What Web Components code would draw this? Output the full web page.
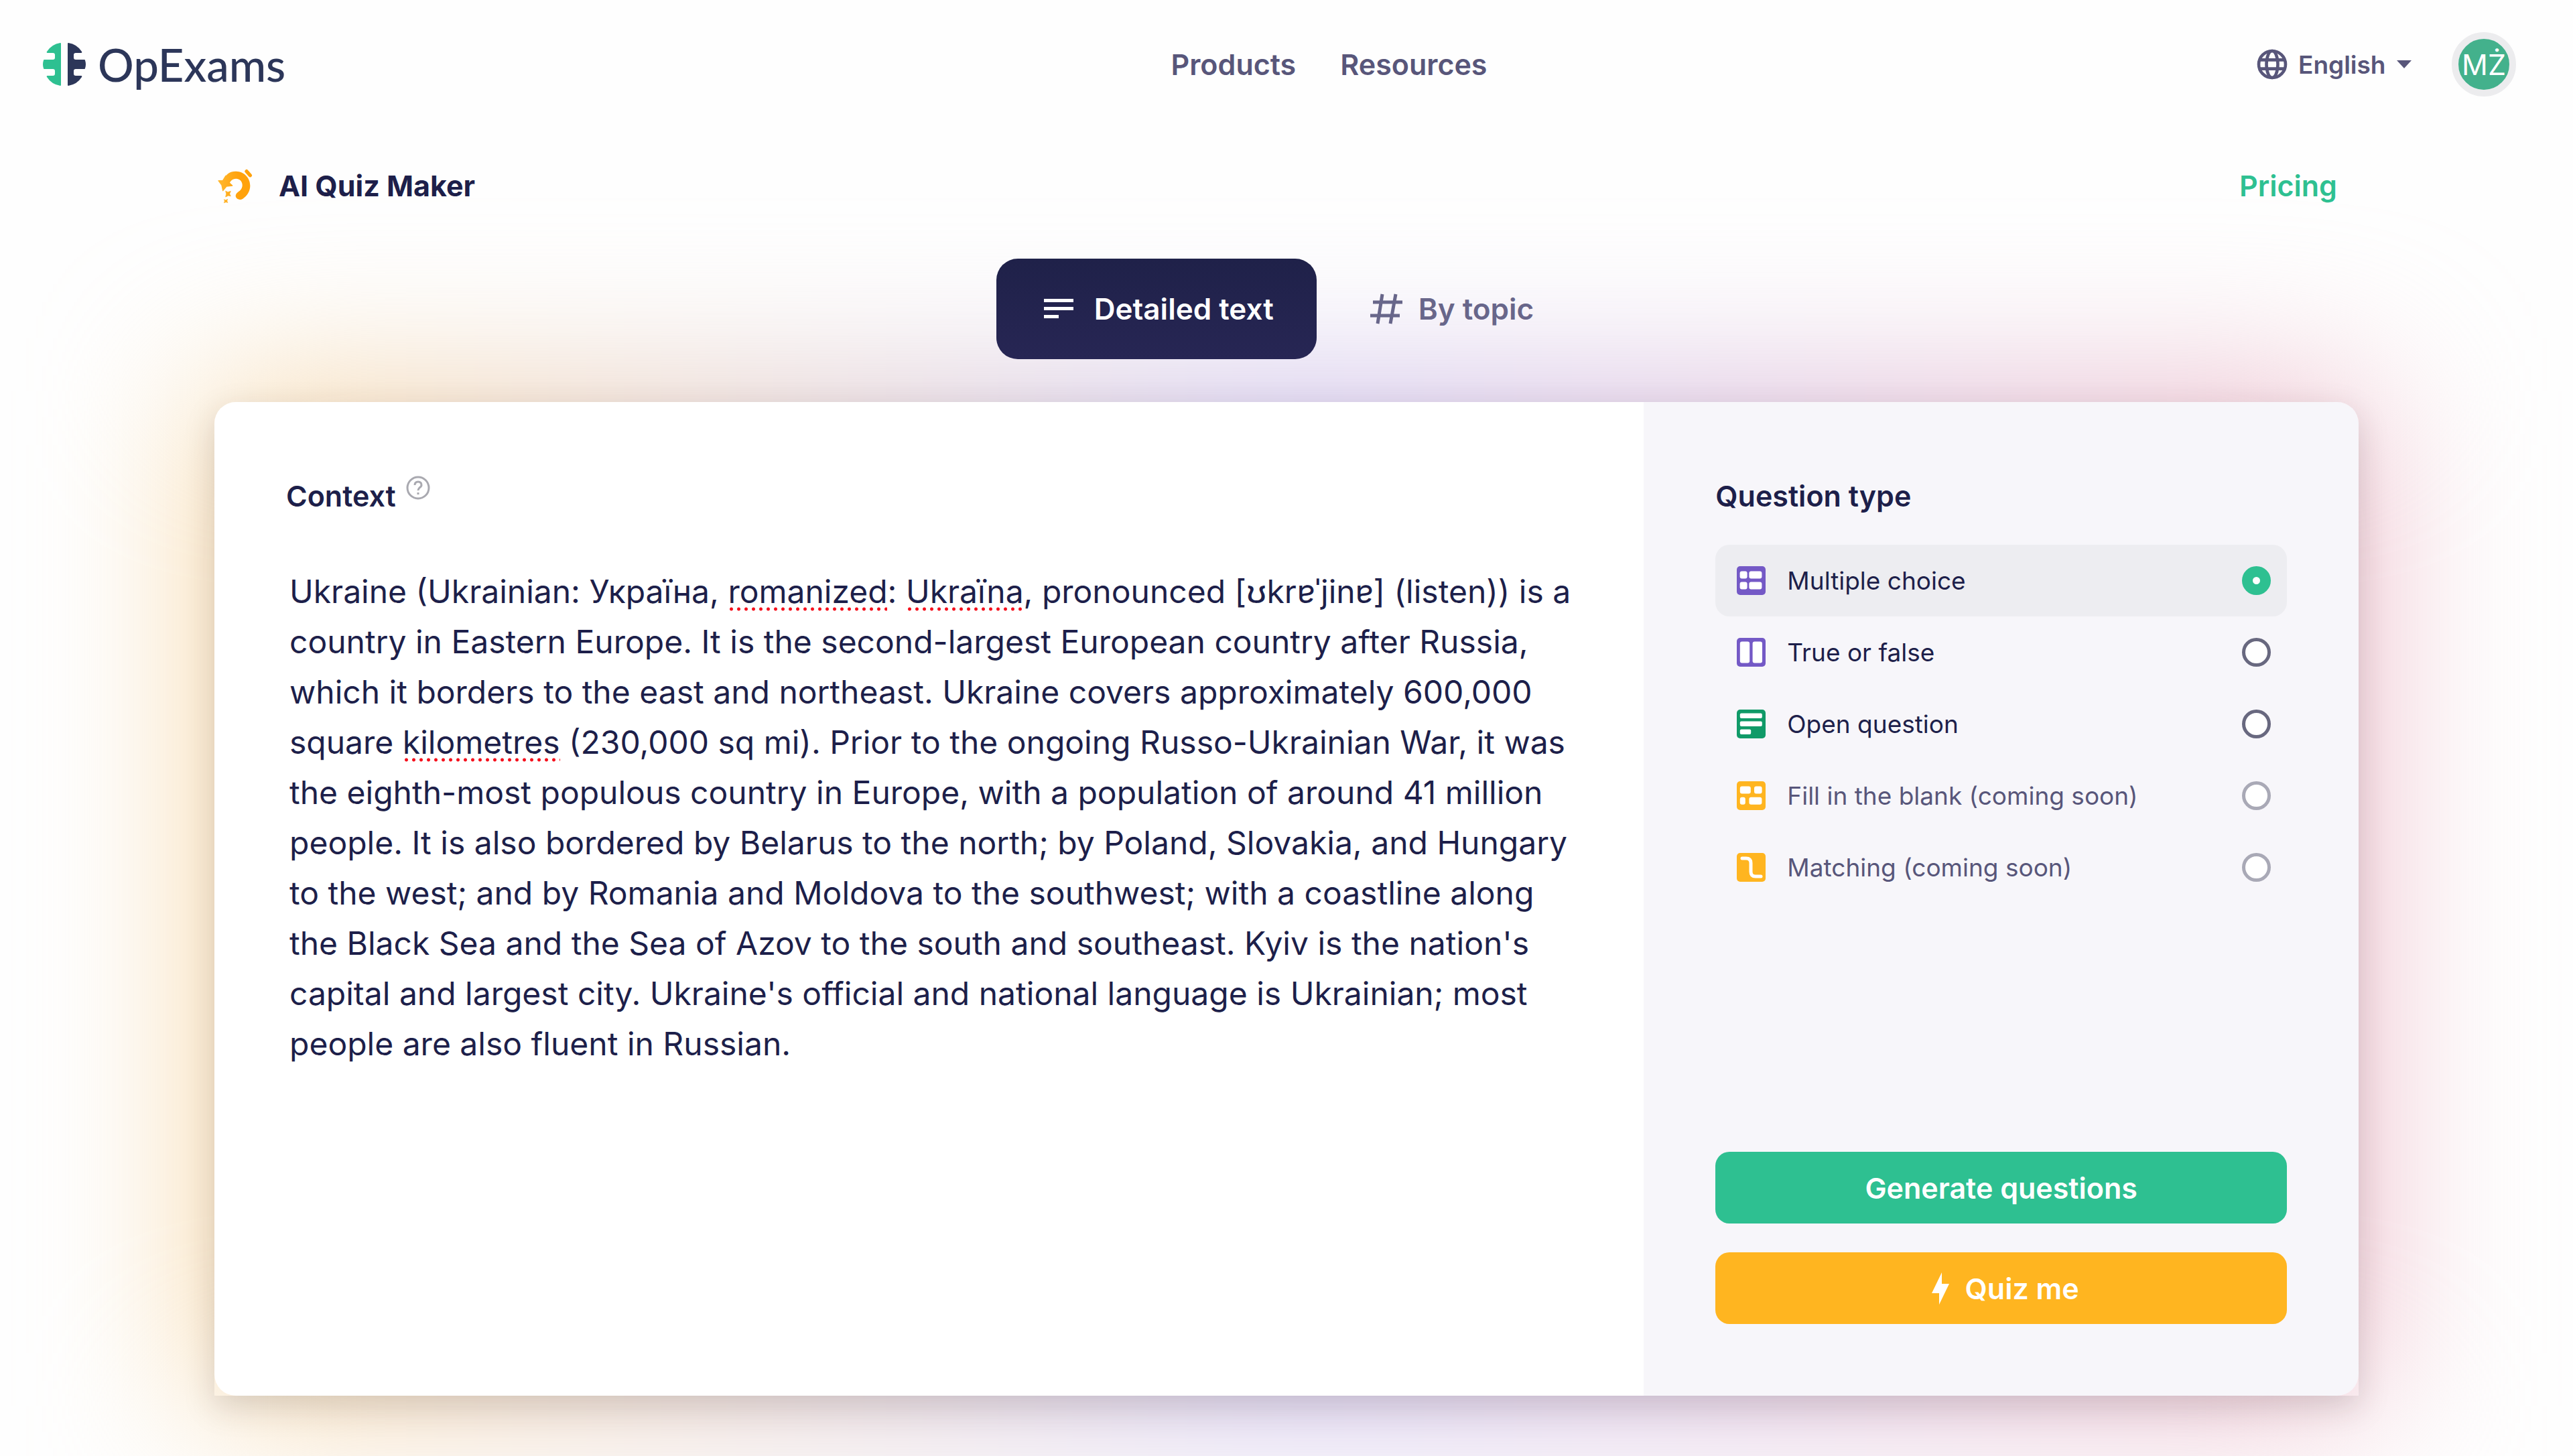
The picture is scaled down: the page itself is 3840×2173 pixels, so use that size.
<!DOCTYPE html>
<html lang="en">
<head>
<meta charset="utf-8">
<title>AI Quiz Maker</title>
<style>
    body {
        margin: 0;
        background: #fefefe;
        font-family: Inter, "Liberation Sans", sans-serif;
        color: #1d1f4a;
    }
</style>
</head>
<body>
<quiz-app></quiz-app>

<script>
// Background colour and white shapes of each question type icon.
const icons = {
    multiple: ['#7459c6', '<rect x="4.6" y="7.5" width="11" height="11" rx="3"/><rect x="18.4" y="7.5" width="19" height="11" rx="3"/><rect x="4.6" y="23.6" width="11" height="11" rx="3"/><rect x="18.4" y="23.6" width="19" height="11" rx="3"/>'],
    boolean: ['#7459c6', '<rect x="4.8" y="5.4" width="14.4" height="32" rx="3"/><rect x="23.6" y="5.4" width="14.4" height="32" rx="3"/>'],
    open: ['#109a68', '<rect x="4.8" y="5.4" width="33" height="7.6" rx="2"/><rect x="4.8" y="17.4" width="33" height="7.6" rx="2"/><rect x="4.8" y="29.5" width="16.4" height="7.6" rx="2"/>'],
    blank: ['#ffb520', '<rect x="4.8" y="7.5" width="16" height="11" rx="3"/><rect x="26" y="7.5" width="11.6" height="11" rx="3"/><rect x="4.8" y="23.8" width="8" height="11" rx="3"/><rect x="18.4" y="23.8" width="19" height="11" rx="3"/>'],
    matching: ['#ffb520', '<path d="M8 8h6q7 0 7 7v13q0 7 7 7h8" fill="none" stroke="#fff" stroke-width="5" stroke-linecap="round"/>'],
}

class AppHeader extends HTMLElement {
    constructor() {
        super()
        this.attachShadow({ mode: 'open' }).innerHTML = `
<style>
    :host {
        display: grid;
        grid-template-columns: 1fr auto 1fr;
        align-items: center;
        height: 192px;
        padding: 0 85px 0 64px;
        color: #58567a;
        font-weight: 600;
    }

    a {
        color: inherit;
        text-decoration: none;
    }

    .logo {
        display: flex;
        align-items: center;
        gap: 18px;
        font: 500 67px/80px Lato, sans-serif;
        color: #2c3659;
    }

    nav {
        display: flex;
        gap: 66px;
        padding-left: 148px;
        font-size: 43px;
    }

    .user {
        display: flex;
        align-items: center;
        justify-content: flex-end;
        gap: 60px;
    }

    .language {
        display: flex;
        align-items: center;
        gap: 16px;
        font-size: 37px;
    }

    select {
        appearance: none;
        margin: 0;
        padding: 0;
        border: 0;
        background: none;
        color: inherit;
        font: inherit;
    }

    .avatar {
        box-sizing: border-box;
        width: 96px;
        height: 96px;
        padding: 0;
        border: 10px solid #ececee;
        border-radius: 50%;
        background: #43b18c;
        color: #fff;
        font: 400 43px Inter, sans-serif;
    }
</style>

<a class="logo" href="#">
    <svg width="64" height="64" viewBox="0 0 64 64" aria-hidden="true">
        <path fill="#2ec091" d="M27 1v62q0 1-1 1Q13 62 6 51q-1-2 1-2h8q3 0 3-3v-4q0-3-3-3H2q-1 0-1-1-2-6 0-12 0-1 1-1h13q3 0 3-3v-4q0-3-3-3H7q-2 0-1-2Q13 2 26 0q1 0 1 1z"/>
        <path fill="#2c3659" d="M37 1v62q0 1 1 1 13-2 20-13 1-2-1-2h-8q-3 0-3-3v-4q0-3 3-3h13q1 0 1-1 2-6 0-12 0-1-1-1H49q-3 0-3-3v-4q0-3 3-3h8q2 0 1-2Q51 2 38 0q-1 0-1 1z"/>
    </svg>
    <span>OpExams</span>
</a>
<nav>
    <a href="#">Products</a>
    <a href="#">Resources</a>
</nav>
<div class="user">
    <label class="language">
        <svg width="46" height="46" viewBox="0 0 46 46" fill="none" stroke="#58567a" stroke-width="4.6" aria-hidden="true">
            <circle cx="23" cy="23" r="20"/>
            <ellipse cx="23" cy="23" rx="8.5" ry="20"/>
            <path d="M4 16.4h38M4 29.6h38"/>
        </svg>
        <select aria-label="Language"><option>English</option></select>
        <svg width="22" height="12" viewBox="0 0 22 12" aria-hidden="true"><path fill="#58567a" d="M0 0h22L11 12z"/></svg>
    </label>
    <button class="avatar">MŻ</button>
</div>
`
    }
}

class ToolHeading extends HTMLElement {
    constructor() {
        super()
        this.attachShadow({ mode: 'open' }).innerHTML = `
<style>
    :host {
        display: flex;
        align-items: center;
        justify-content: space-between;
        height: 170px;
        padding-right: 32px;
    }

    h1 {
        display: flex;
        align-items: center;
        gap: 32px;
        margin: 0;
        font-size: 43px;
        font-weight: 700;
    }

    a {
        color: #2ec091;
        font-size: 43px;
        font-weight: 600;
        text-decoration: none;
    }
</style>

<h1>
    <svg width="64" height="64" viewBox="30 30 192 192" aria-hidden="true">
        <defs>
            <linearGradient id="ring" gradientUnits="userSpaceOnUse" x1="46" y1="0" x2="190" y2="0">
                <stop offset="0" stop-color="#ffb830"/>
                <stop offset=".65" stop-color="#ffa20c"/>
            </linearGradient>
        </defs>
        <g fill="url(#ring)" stroke-linejoin="round">
            <path d="M69 102C80 74 102 61 127 62c36 1 63 29 63 64 0 24-12 45-33 59-20 12-42-8-27-25 12-10 25-17 25-36 0-18-13-29-28-29-18 0-27 12-30 24z"/>
            <path d="M48 104l20-1 13-21 7 24 22 20-26 3-16 20-5-25z" stroke="url(#ring)" stroke-width="4"/>
            <path d="M80 150l10 5 13-4-5 12 5 10-11-2-12 6 3-14z" stroke="url(#ring)" stroke-width="2"/>
            <path d="M73 188l8 3 8-4-3 8 4 7-9-2-8 3 3-8z" stroke="url(#ring)" stroke-width="2"/>
        </g>
        <path d="M174 62l16 18" stroke="#ffa20c" stroke-width="16" stroke-linecap="round"/>
    </svg>
    <slot></slot>
</h1>
<a href="#">Pricing</a>
`
    }
}

class ModeTab extends HTMLElement {
    connectedCallback() {
        const active = this.hasAttribute('active')
        this.attachShadow({ mode: 'open' }).innerHTML = `
<style>
    :host {
        display: block;
    }

    button {
        display: flex;
        align-items: center;
        gap: 24px;
        height: 150px;
        padding: 0 64px;
        border: 0;
        border-radius: 32px;
        background: none;
        color: #68668a;
        font: 600 44px Inter, sans-serif;
    }

    button.active {
        background: linear-gradient(#1f2149, #272654);
        color: #fff;
    }
</style>

<button class="${active ? 'active' : ''}" aria-pressed="${active}"><slot name="icon"></slot><slot></slot></button>
`
    }
}

class QuestionOption extends HTMLElement {
    connectedCallback() {
        const [color, shapes] = icons[this.getAttribute('icon')]
        const checked = this.hasAttribute('checked') ? 'checked' : ''
        const disabled = this.hasAttribute('disabled') ? 'disabled' : ''
        this.attachShadow({ mode: 'open' }).innerHTML = `
<style>
    :host {
        display: block;
    }

    label {
        display: flex;
        align-items: center;
        gap: 32px;
        height: 107px;
        padding: 0 24px 0 32px;
        border-radius: 21px;
        font-size: 37px;
    }

    label.checked {
        background: #ededf1;
    }

    label.disabled {
        color: #58567a;
    }

    span {
        flex: 1;
    }

    input {
        appearance: none;
        box-sizing: border-box;
        width: 43px;
        height: 43px;
        margin: 0;
        border: 5px solid #68687f;
        border-radius: 50%;
        background: #fff;
    }

    input:checked {
        border: 16px solid #2ec091;
    }

    input:disabled {
        border-color: #a9a9b6;
    }
</style>

<label class="${checked} ${disabled}">
    <svg width="43" height="43" viewBox="0 0 43 43" fill="#fff" aria-hidden="true"><rect width="43" height="43" rx="5" fill="${color}"/>${shapes}</svg>
    <span><slot></slot></span>
    <input type="radio" name="question-type" ${checked} ${disabled}>
</label>
`
    }
}

class ActionButton extends HTMLElement {
    constructor() {
        super()
        this.attachShadow({ mode: 'open' }).innerHTML = `
<style>
    :host {
        display: block;
    }

    button {
        display: flex;
        align-items: center;
        justify-content: center;
        gap: 24px;
        width: 100%;
        height: 107px;
        border: 0;
        border-radius: 21px;
        background: var(--action-color);
        color: #fff;
        font: 600 43px Inter, sans-serif;
    }
</style>

<button><slot></slot></button>
`
    }
}

class ContextEditor extends HTMLElement {
    constructor() {
        super()
        this.shadow = this.attachShadow({ mode: 'open' })
        this.shadow.innerHTML = `
<style>
    :host {
        display: flex;
        flex-direction: column;
        padding: 107px 80px 107px 107px;
    }

    label {
        display: flex;
        gap: 12px;
        margin: 0 0 67px;
        font-size: 43px;
        font-weight: 600;
        line-height: 66px;
    }

    .field {
        position: relative;
        display: flex;
        flex: 1;
    }

    textarea, .mirror {
        box-sizing: border-box;
        width: 100%;
        margin: 0;
        padding: 5px;
        border: 0;
        font: 400 48px/75px Inter, "Liberation Sans", sans-serif;
        white-space: pre-wrap;
        overflow-wrap: break-word;
    }

    textarea {
        background: none;
        color: inherit;
        outline: none;
        resize: none;
        overflow: hidden;
    }

    .mirror {
        position: absolute;
        inset: 0;
        visibility: hidden;
    }

    .mark {
        position: absolute;
        height: 6px;
        background: radial-gradient(circle, #f5101c 2px, transparent 3px) 0 0 / 11px 6px repeat-x;
        pointer-events: none;
    }
</style>

<label for="context">Context
    <svg width="42" height="42" viewBox="0 0 42 42" fill="none" stroke="#a9a9b0" stroke-width="3" aria-hidden="true">
        <circle cx="21" cy="21" r="16"/>
        <path d="M16 17q0-5 5-5t5 5q0 2-3 4-2 2-2 4M21 28v3"/>
    </svg>
</label>
<div class="field"><textarea id="context" spellcheck="false"></textarea></div>
`
    }

    connectedCallback() {
        this.field = this.shadow.querySelector('.field')
        this.input = this.shadow.querySelector('textarea')
        this.input.value = this.getAttribute('value')
        this.input.addEventListener('input', () => this.markWords())
        window.addEventListener('resize', () => this.markWords())
        this.markWords()
    }

    // Lay the text out once in a hidden copy, so that the words to underline
    // can be measured, then drop the copy again.
    markWords() {
        this.shadow.querySelectorAll('.mark').forEach((mark) => mark.remove())
        const mirror = document.createElement('div')
        mirror.className = 'mirror'
        mirror.textContent = this.input.value
        this.field.appendChild(mirror)

        const origin = this.field.getBoundingClientRect()
        const range = document.createRange()
        const marks = []
        for (const word of this.getAttribute('misspelled').split(' ')) {
            const start = this.input.value.indexOf(word)
            if (start < 0) continue
            range.setStart(mirror.firstChild, start)
            range.setEnd(mirror.firstChild, start + word.length)
            const rect = range.getBoundingClientRect()
            const mark = document.createElement('i')
            mark.className = 'mark'
            mark.style.left = `${Math.round(rect.left - origin.left)}px`
            mark.style.top = `${Math.round(rect.bottom - origin.top - 6)}px`
            mark.style.width = `${Math.round(rect.width)}px`
            marks.push(mark)
        }
        mirror.remove()
        this.field.append(...marks)
    }
}

class QuizApp extends HTMLElement {
    constructor() {
        super()
        this.attachShadow({ mode: 'open' }).innerHTML = `
<style>
    :host {
        display: block;
        min-height: 100vh;
        overflow: hidden;
    }

    main {
        width: calc(100% / 1.2);
        margin: 0 auto;
        padding-bottom: 90px;
        isolation: isolate;
    }

    .tabs {
        display: flex;
        justify-content: center;
        gap: 16px;
        padding: 24px 0 64px;
    }

    .card {
        position: relative;
        display: grid;
        grid-template-columns: 2fr 1fr;
        min-height: 1483px;
        border-radius: 32px 32px 0 0;
        box-shadow: 0 16px 48px rgba(50, 35, 35, .17);
    }

    .card::before {
        content: "";
        position: absolute;
        inset: -16px;
        z-index: -1;
        background: linear-gradient(90deg, #fbdaa4, #cbbdea 50%, #f0bcc8);
        filter: blur(120px);
    }

    .panel {
        display: flex;
        flex-direction: column;
        box-sizing: border-box;
        padding: 107px;
        background: #f7f6fa;
        border-radius: 0 32px 32px 0;
    }

    context-editor {
        background: #fff;
        border-radius: 32px 0 0 32px;
    }

    h2 {
        margin: 0 0 40px;
        font-size: 43px;
        font-weight: 600;
        line-height: 66px;
    }

    .actions {
        display: grid;
        gap: 43px;
        margin-top: auto;
    }
</style>

<app-header></app-header>
<main>
    <tool-heading>AI Quiz Maker</tool-heading>
    <div class="tabs">
        <mode-tab active>
            <svg slot="icon" width="58" height="48" viewBox="0 0 58 48" fill="#fff" aria-hidden="true"><path d="M7 9h44v5H7zM7 21h44v5H7zM7 33h22v5H7z"/></svg>Detailed text
        </mode-tab>
        <mode-tab>
            <svg slot="icon" width="48" height="48" viewBox="0 0 48 48" fill="none" stroke="#68668a" stroke-width="5" aria-hidden="true"><path d="M18 2l-7 44M38 2l-8 44M4 14h44M0 34h44"/></svg>By topic
        </mode-tab>
    </div>
    <div class="card">
        <context-editor
            misspelled="romanized Ukraïna kilometres"
            value="Ukraine (Ukrainian: Україна, romanized: Ukraïna, pronounced [ʊkrɐˈjinɐ] (listen)) is a country in Eastern Europe. It is the second-largest European country after Russia, which it borders to the east and northeast. Ukraine covers approximately 600,000 square kilometres (230,000 sq mi). Prior to the ongoing Russo-Ukrainian War, it was the eighth-most populous country in Europe, with a population of around 41 million people. It is also bordered by Belarus to the north; by Poland, Slovakia, and Hungary to the west; and by Romania and Moldova to the southwest; with a coastline along the Black Sea and the Sea of Azov to the south and southeast. Kyiv is the nation's capital and largest city. Ukraine's official and national language is Ukrainian; most people are also fluent in Russian."></context-editor>
        <section class="panel">
            <h2>Question type</h2>
            <question-option icon="multiple" checked>Multiple choice</question-option>
            <question-option icon="boolean">True or false</question-option>
            <question-option icon="open">Open question</question-option>
            <question-option icon="blank" disabled>Fill in the blank (coming soon)</question-option>
            <question-option icon="matching" disabled>Matching (coming soon)</question-option>
            <div class="actions">
                <action-button style="--action-color: #2ec091">Generate questions</action-button>
                <action-button style="--action-color: #ffb520"><svg width="38" height="48" viewBox="-12 0 38 48" fill="#fff" aria-hidden="true"><path d="M15 0v17h11L11 48V31H0z"/></svg>Quiz me</action-button>
            </div>
        </section>
    </div>
</main>
`
    }
}

customElements.define('app-header', AppHeader)
customElements.define('tool-heading', ToolHeading)
customElements.define('mode-tab', ModeTab)
customElements.define('question-option', QuestionOption)
customElements.define('action-button', ActionButton)
customElements.define('context-editor', ContextEditor)
customElements.define('quiz-app', QuizApp)
</script>
</body>
</html>
